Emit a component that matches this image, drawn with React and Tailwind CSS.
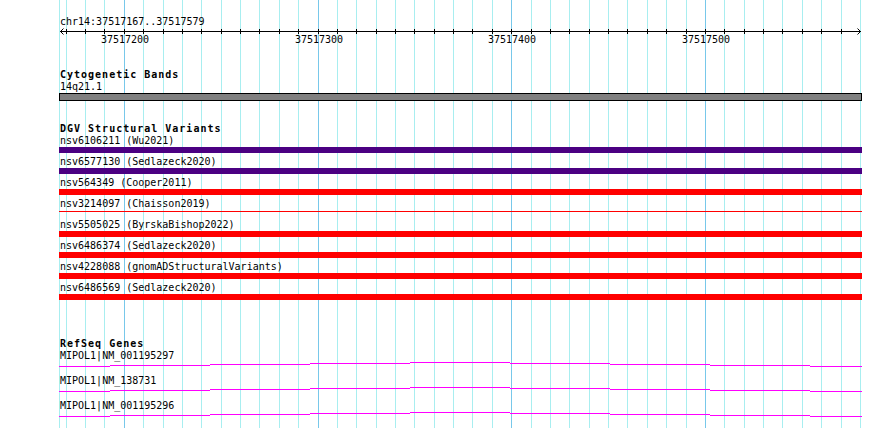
import React from 'react';

const START = 37517167;
const SCALE = 1.937;
const xOf = (bp) => Math.floor(60.4 + (bp - START) * SCALE);

const MINOR = '#a8eef0';
const MAJOR = '#78c8ea';

const gridBps = [];
for (let bp = 37517170; bp <= 37517570; bp += 10) gridBps.push(bp);

const variants = [
  { id: 'nsv6106211', src: 'Wu2021', color: 'bg-[#4b0082]' },
  { id: 'nsv6577130', src: 'Sedlazeck2020', color: 'bg-[#4b0082]' },
  { id: 'nsv564349', src: 'Cooper2011', color: 'bg-[#ff0000]' },
  { id: 'nsv3214097', src: 'Chaisson2019', color: 'bg-[#ff0000]', thin: true },
  { id: 'nsv5505025', src: 'ByrskaBishop2022', color: 'bg-[#ff0000]' },
  { id: 'nsv6486374', src: 'Sedlazeck2020', color: 'bg-[#ff0000]' },
  { id: 'nsv4228088', src: 'gnomADStructuralVariants', color: 'bg-[#ff0000]' },
  { id: 'nsv6486569', src: 'Sedlazeck2020', color: 'bg-[#ff0000]' },
];

const genes = ['MIPOL1|NM_001195297', 'MIPOL1|NM_138731', 'MIPOL1|NM_001195296'];

// intron connector is a very shallow arc, drawn as 1px steps
const arcSteps = [
  [59, 110, 4], [110, 210, 3], [210, 310, 2], [310, 410, 1], [410, 510, 0],
  [510, 610, 1], [610, 710, 2], [710, 810, 3], [810, 862, 4],
];

const Grid = () => (
  <svg className="absolute left-0 top-0" width="890" height="428" shapeRendering="crispEdges">
    <rect x="59" y="0" width="1" height="428" fill={MINOR} />
    <rect x="860" y="0" width="1" height="428" fill={MINOR} />
    {gridBps.map((bp) => (
      <rect key={bp} x={xOf(bp)} y="0" width="1" height="428" fill={bp % 100 === 0 ? MAJOR : MINOR} />
    ))}
  </svg>
);

const Axis = () => (
  <div className="relative h-[20px]">
    <svg className="absolute left-0 top-0" width="890" height="20">
      <rect x="60" y="3" width="801" height="1" fill="#000" shapeRendering="crispEdges" />
      {gridBps.map((bp) => (
        <rect key={bp} x={xOf(bp)} y="1" width="1" height="5" fill="#000" shapeRendering="crispEdges" />
      ))}
      <polyline points="63.5,0.5 60.5,3.5 63.5,6.5" fill="none" stroke="#000" strokeWidth="1" />
      <polyline points="857.5,0.5 860.5,3.5 857.5,6.5" fill="none" stroke="#000" strokeWidth="1" />
    </svg>
    {[37517200, 37517300, 37517400, 37517500].map((bp) => (
      <span
        key={bp}
        className="absolute top-[5px] w-[50px] text-center text-[10px] leading-[13px]"
        style={{ left: xOf(bp) - 24 }}
      >
        {bp}
      </span>
    ))}
  </div>
);

const TrackTitle = ({ children, className = '' }) => (
  <div className={`ml-[60px] h-[11px] text-[10px] leading-[11px] font-bold tracking-[1px] whitespace-nowrap ${className}`}>
    {children}
  </div>
);

const Label = ({ children }) => (
  <div className="ml-[60px] h-[13px] text-[10px] leading-[13px] whitespace-pre">{children}</div>
);

const GeneLine = () => (
  <svg width="890" height="12" shapeRendering="crispEdges" className="block">
    {arcSteps.map(([x1, x2, y]) => (
      <rect key={x1} x={x1} y={y} width={x2 - x1} height="1" fill="#ff00ff" />
    ))}
  </svg>
);

export default function App() {
  return (
    <div className="relative w-[890px] h-[428px] overflow-hidden bg-white text-black font-['DejaVu_Sans_Mono',monospace]">
      <Grid />

      <div className="relative flex flex-col pt-[15px]">
        <Label>chr14:37517167..37517579</Label>
        <Axis />

        {/* Cytogenetic Bands */}
        <TrackTitle className="mt-[21px]">Cytogenetic Bands</TrackTitle>
        <Label>14q21.1</Label>
        <div className="ml-[59px] w-[803px] h-[8px] border border-black bg-[#808080]" />

        {/* DGV Structural Variants */}
        <TrackTitle className="mt-[22px]">DGV Structural Variants</TrackTitle>
        <div className="flex flex-col gap-[2px]">
          {variants.map((v) => (
            <div key={v.id} className="flex flex-col">
              <Label>{`${v.id} (${v.src})`}</Label>
              <div className="ml-[59px] w-[803px] h-[6px]">
                {v.thin ? (
                  <div className={`mt-[1px] h-[1px] ${v.color}`} />
                ) : (
                  <div className={`h-[6px] ${v.color}`} />
                )}
              </div>
            </div>
          ))}
        </div>

        {/* RefSeq Genes */}
        <TrackTitle className="mt-[38px]">RefSeq Genes</TrackTitle>
        {genes.map((g) => (
          <div key={g} className="flex flex-col">
            <Label>{g}</Label>
            <GeneLine />
          </div>
        ))}
      </div>
    </div>
  );
}
